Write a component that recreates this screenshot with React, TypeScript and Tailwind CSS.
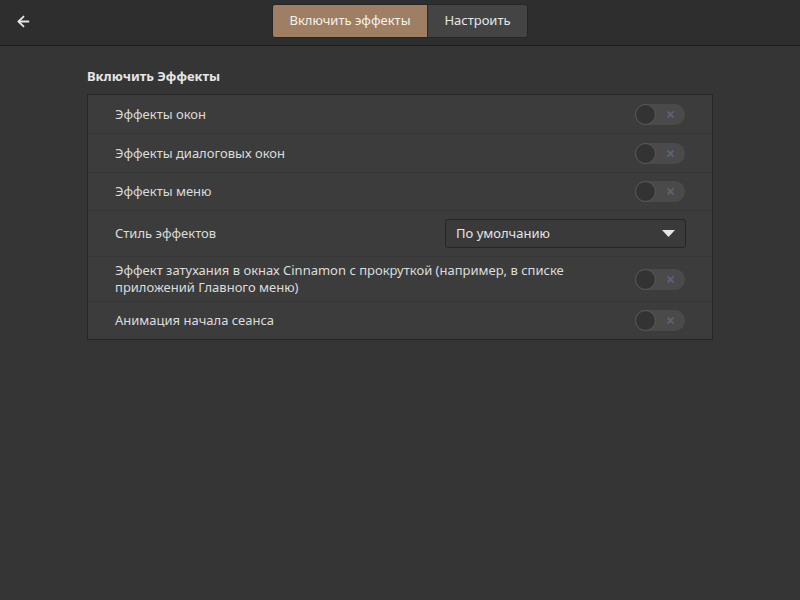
import { ArrowLeft } from "lucide-react";

const Toggle = () => (
  <div className="relative w-[50px] h-[21px] rounded-full bg-[#4a4a4a] flex items-center">
    <div className="w-[21px] h-[21px] rounded-full bg-[#333333] border border-[#5a5a5a]" />
    <svg
      className="absolute right-[10px] top-[6px]"
      width="9"
      height="9"
      viewBox="0 0 9 9"
    >
      <path d="M1.5 1.5 L7.5 7.5 M7.5 1.5 L1.5 7.5" stroke="#5b6076" strokeWidth="1.8" />
    </svg>
  </div>
);

const Row = ({
  label,
  children,
  last,
  className,
}: {
  label: React.ReactNode;
  children: React.ReactNode;
  last?: boolean;
  className?: string;
}) => (
  <div
    className={`flex items-center justify-between pl-[27px] pr-[27px] ${
      last ? "" : "border-b border-[#363636]"
    } ${className ?? "h-[39px]"}`}
  >
    <div className="text-[13px] leading-[17px] text-[#dcdcdc]">{label}</div>
    {children}
  </div>
);

export default function App() {
  return (
    <div
      className="w-[800px] h-[600px] bg-[#353535] flex flex-col"
      style={{ fontFamily: '"Noto Sans", "Open Sans", sans-serif' }}
    >
      <div className="h-[46px] bg-[#2e2e2e] border-b border-[#1c1c1c] flex items-center relative shrink-0">
        <button className="absolute left-[15px] top-[13px] text-[#e6e6e6]">
          <ArrowLeft size={17} strokeWidth={2.5} />
        </button>
        <div className="mx-auto flex h-[34px] mt-[-3px] rounded-[3px] overflow-hidden border border-[#262626]">
          <div className="w-[155px] bg-[#9f7f63] text-[#f2f2f2] text-[13px] flex items-center justify-center border-r border-[#2a2a2a]">
            Включить эффекты
          </div>
          <div className="w-[99px] bg-[#444444] text-[#e6e6e6] text-[13px] flex items-center justify-center">
            Настроить
          </div>
        </div>
      </div>

      <div className="pl-[87px] pr-[87px] pt-[21px]">
        <div className="text-[13px] font-bold text-[#e6e6e6] leading-[18px] mb-[9px]">
          Включить Эффекты
        </div>
        <div className="bg-[#3c3c3c] border border-[#262626] flex flex-col">
          <Row label="Эффекты окон">
            <Toggle />
          </Row>
          <Row label="Эффекты диалоговых окон">
            <Toggle />
          </Row>
          <Row label="Эффекты меню" className="h-[38px]">
            <Toggle />
          </Row>
          <Row label="Стиль эффектов" className="h-[46px]">
            <div className="w-[241px] h-[29px] mr-[-1px] rounded-[3px] border border-[#262626] bg-[#3a3a3a] flex items-center justify-between pl-[10px] pr-[10px]">
              <span className="text-[13px] text-[#e6e6e6]">По умолчанию</span>
              <svg width="13" height="7" viewBox="0 0 13 7">
                <path d="M0 0 H13 L6.5 7 Z" fill="#e6e6e6" />
              </svg>
            </div>
          </Row>
          <Row
            className="h-[45px]"
            label={
              <>
                Эффект затухания в окнах Cinnamon с прокруткой (например, в списке
                <br />
                приложений Главного меню)
              </>
            }
          >
            <Toggle />
          </Row>
          <Row label="Анимация начала сеанса" last className="h-[37px]">
            <Toggle />
          </Row>
        </div>
      </div>
    </div>
  );
}
